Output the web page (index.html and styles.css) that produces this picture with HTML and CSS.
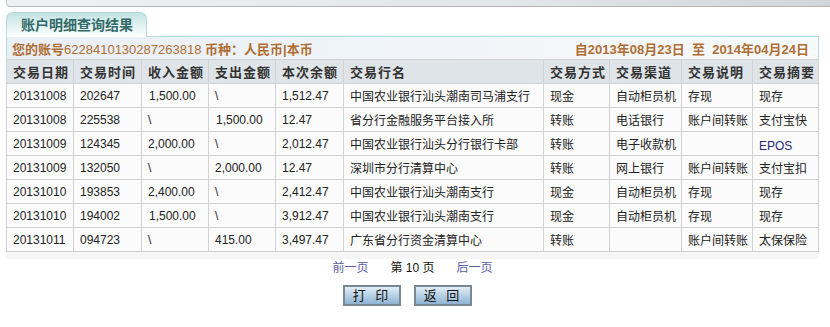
FILE: index.html
```html
<!DOCTYPE html>
<html>
<head>
<meta charset="utf-8">
<link rel="stylesheet" href="styles.css">
</head>
<body>
<div class="topbar"></div>
<div class="wrap">
  <div class="tab">账户明细查询结果</div>
  <div class="info">
    <div class="acct"><b>您的账号</b>6228410130287263818 <b>币种：人民币|本币</b></div>
    <div class="range"><b>自2013年08月23日&nbsp; 至&nbsp; 2014年04月24日</b></div>
  </div>
  <table class="grid">
    <colgroup>
      <col style="width:67px"><col style="width:68px"><col style="width:67px"><col style="width:67px"><col style="width:68px"><col style="width:200px"><col style="width:66px"><col style="width:72px"><col style="width:71px"><col style="width:66px">
    </colgroup>
    <thead>
      <tr><th>交易日期</th><th>交易时间</th><th>收入金额</th><th>支出金额</th><th>本次余额</th><th>交易行名</th><th>交易方式</th><th>交易渠道</th><th>交易说明</th><th>交易摘要</th></tr>
    </thead>
    <tbody>
      <tr><td>20131008</td><td>202647</td><td class="sh">1,500.00</td><td>\</td><td>1,512.47</td><td>中国农业银行汕头潮南司马浦支行</td><td>现金</td><td>自动柜员机</td><td>存现</td><td>现存</td></tr>
      <tr><td>20131008</td><td>225538</td><td>\</td><td class="sh">1,500.00</td><td>12.47</td><td>省分行金融服务平台接入所</td><td>转账</td><td>电话银行</td><td>账户间转账</td><td>支付宝快</td></tr>
      <tr><td>20131009</td><td>124345</td><td>2,000.00</td><td>\</td><td>2,012.47</td><td>中国农业银行汕头分行银行卡部</td><td>转账</td><td>电子收款机</td><td></td><td class="epos">EPOS</td></tr>
      <tr><td>20131009</td><td>132050</td><td>\</td><td>2,000.00</td><td>12.47</td><td>深圳市分行清算中心</td><td>转账</td><td>网上银行</td><td>账户间转账</td><td>支付宝扣</td></tr>
      <tr><td>20131010</td><td>193853</td><td>2,400.00</td><td>\</td><td>2,412.47</td><td>中国农业银行汕头潮南支行</td><td>现金</td><td>自动柜员机</td><td>存现</td><td>现存</td></tr>
      <tr><td>20131010</td><td>194002</td><td class="sh">1,500.00</td><td>\</td><td>3,912.47</td><td>中国农业银行汕头潮南支行</td><td>现金</td><td>自动柜员机</td><td>存现</td><td>现存</td></tr>
      <tr><td>20131011</td><td>094723</td><td>\</td><td>415.00</td><td>3,497.47</td><td>广东省分行资金清算中心</td><td>转账</td><td></td><td>账户间转账</td><td>太保保险</td></tr>
    </tbody>
  </table>
  <div class="band"></div>
  <div class="pager">
    <a class="plink">前一页</a>
    <span class="pnum">第 10 页</span>
    <a class="plink">后一页</a>
  </div>
  <div class="buttons">
    <button class="btn">打 印</button>
    <button class="btn">返 回</button>
  </div>
</div>
</body>
</html>
```
FILE: styles.css
```css
* { box-sizing: border-box; }
html, body { margin: 0; padding: 0; background: #fff; }
body {
  font-family: "Liberation Sans", Arial, "Noto Sans CJK SC", sans-serif;
  font-size: 12px;
  color: #222;
  width: 830px;
  height: 327px;
  overflow: hidden;
}
.topbar {
  margin-left: 6px;
  height: 7px;
  border-left: 1px solid #c4c8cb;
  border-bottom: 1px solid #b4b7ba;
  border-bottom-left-radius: 4px;
  background: linear-gradient(to right, #eef1f3, #e2e7ea 60%, #d0d6da);
}
.wrap {
  width: 819px;
  padding-left: 6px;
  padding-top: 5px;
}
.tab {
  width: 141px;
  height: 25px;
  border: 1px solid #b3d9d9;
  border-bottom: none;
  border-radius: 7px 7px 0 0;
  background: linear-gradient(to bottom, #c3e3e3, #ffffff);
  color: #336b68;
  font-weight: bold;
  font-size: 14px;
  line-height: 24px;
  padding-left: 14px;
  margin-bottom: -1px;
  position: relative;
  z-index: 1;
}
.info {
  height: 23px;
  border: 1px solid #b8dcdc;
  border-bottom: none;
  background: linear-gradient(to right, #e9eff5, #f7fafc);
  display: flex;
  justify-content: space-between;
  align-items: center;
  padding: 0 9px 0 5px;
  color: #b06e34;
  font-size: 13px;
}
.info b { font-weight: bold; }
.grid {
  width: 813px;
  border-collapse: collapse;
  table-layout: fixed;
}
.grid th, .grid td {
  border: 1px solid #d2d2d2;
  height: 24px;
  padding: 0 0 0 6px;
  text-align: left;
  white-space: nowrap;
  overflow: hidden;
}
.grid th {
  background: #dfe4e8;
  color: #333;
  font-size: 13px;
  letter-spacing: 1px;
  font-weight: bold;
}
.grid td {
  background: #fbfbfb;
  font-size: 12px;
  color: #222;
}
.grid td.sh { padding-left: 7px; }
.grid td.epos { color: #2a2a7a; padding-top: 5px; }
.band {
  width: 813px;
  height: 7px;
  background: #f6f6f6;
}
.pager {
  display: flex;
  justify-content: center;
  gap: 22px;
  line-height: 16px;
  height: 18px;
  padding-top: 1px;
  font-size: 12px;
  width: 813px;
}
.plink { color: #5a5ea8; }
.pnum { color: #111; }
.buttons {
  width: 813px;
  display: flex;
  justify-content: center;
  gap: 13px;
  margin-top: 8px;
  padding-right: 10px;
}
.btn {
  width: 58px;
  height: 21px;
  border: 2px solid #7a8893;
  background: linear-gradient(to bottom, #e2eef7, #8db3d3);
  font-family: "Liberation Sans", "Noto Sans CJK SC", sans-serif;
  font-size: 13px;
  color: #111;
  letter-spacing: 3px;
  padding: 0;
  line-height: 16px;
}
```
